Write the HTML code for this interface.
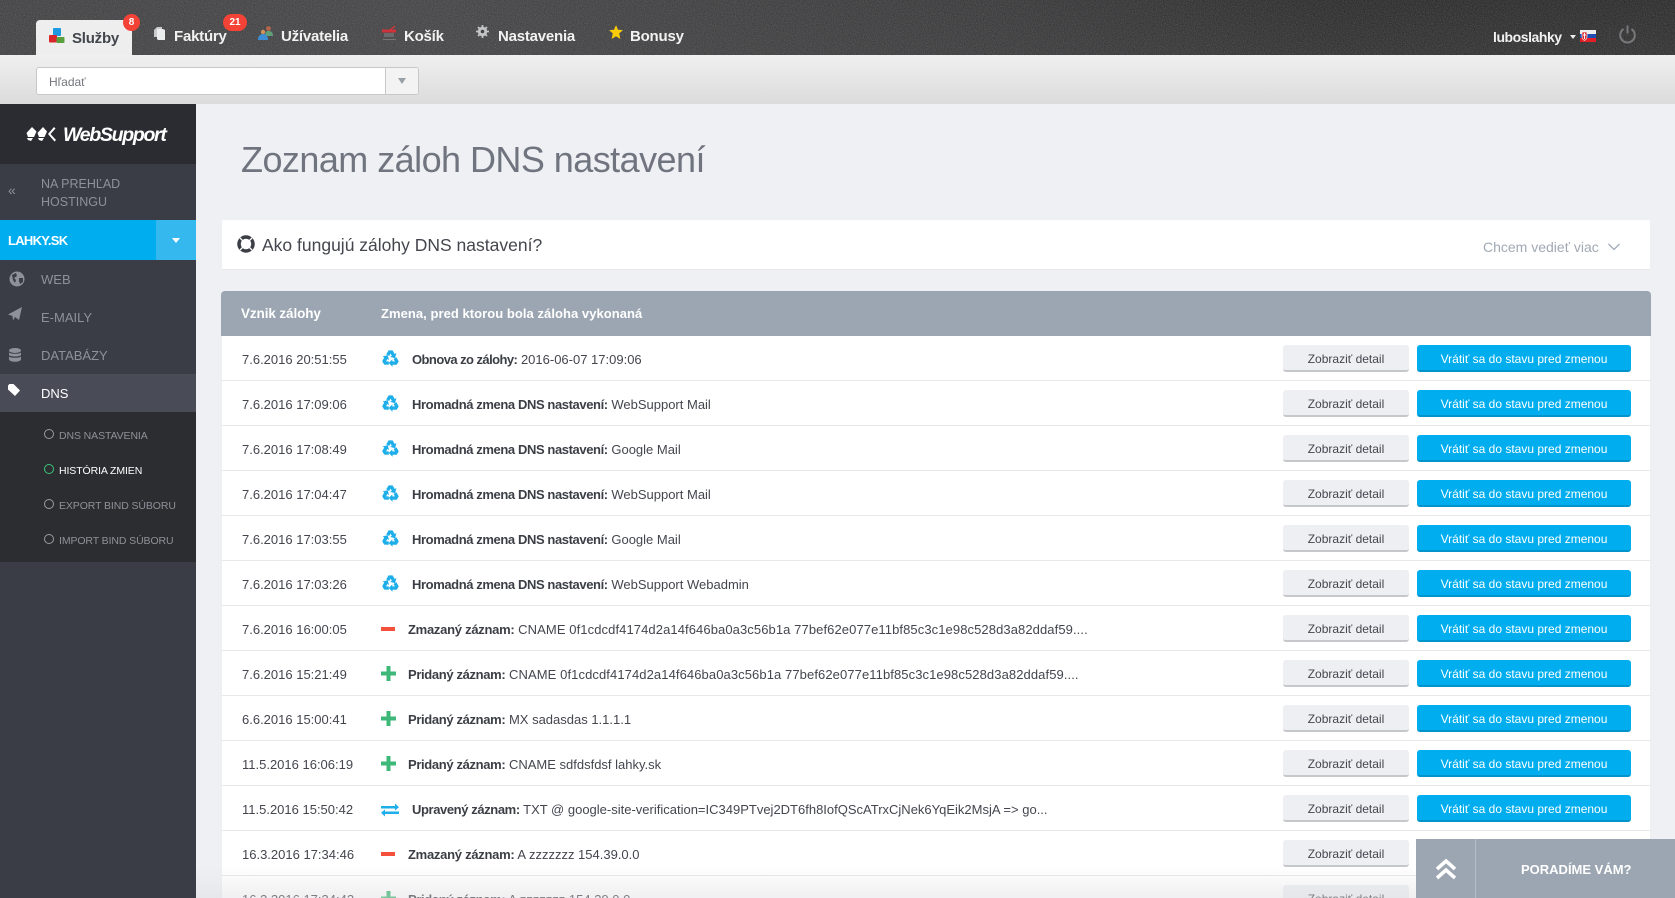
<!DOCTYPE html>
<html lang="sk"><head><meta charset="utf-8"><title>Zoznam záloh DNS nastavení</title>
<style>
*{box-sizing:border-box}
html,body{margin:0;padding:0;width:1675px;height:898px;overflow:hidden;background:#eef0f4;font-family:"Liberation Sans",sans-serif;color:#44464e}
#w{position:absolute;left:0;top:0;width:1675px;height:898px;overflow:hidden}
.a{position:absolute;white-space:nowrap}
#top{left:0;top:0;width:1675px;height:55px;background:linear-gradient(90deg,rgba(70,70,72,.85) 0,rgba(72,72,74,.9) 25%,rgba(70,70,72,.5) 60%,rgba(60,60,60,0) 80%),linear-gradient(#2c2c2d,#333334)}
.nav{font-size:15px;font-weight:bold;color:#f2f2f2;top:28px;line-height:18px;letter-spacing:-.22px}
.bdg{background:#f44336;color:#fff;font-size:10px;font-weight:bold;text-align:center;line-height:17px;height:17px;border-radius:9px;top:14px}
#srch{left:0;top:55px;width:1675px;height:49px;background:linear-gradient(#f0f0f0,#dcdbdb)}
#side{left:0;top:104px;width:196px;height:794px;background:#3a3d46}
.s{font-size:13px;color:#8e9199;left:41px;line-height:18px}
.ss{font-size:10.5px;color:#8e9199;left:59px;line-height:14px;letter-spacing:-.1px}
.c{left:44px;width:10px;height:10px;border:1.5px solid #9a9ca2;border-radius:50%}
.r{left:222px;width:1428px;height:45px;background:#fff;border-bottom:1px solid #e8e8ea}
.r .d{position:absolute;left:20px;top:16px;font-size:13px;line-height:16px;color:#44464e}
.r .t{position:absolute;top:16px;font-size:13px;line-height:16px;color:#44464e;white-space:nowrap}
.r b{color:#3c3e46}
.r svg{position:absolute}
.b1{position:absolute;left:1061px;top:9px;width:126px;height:27px;background:#eeeff3;border-bottom:2px solid #c6c7cb;border-radius:3px;font-size:12px;text-align:center;line-height:29px;color:#44464e}
.b2{position:absolute;left:1195px;top:9px;width:214px;height:27px;background:#00aeef;border-bottom:2px solid #0094cc;border-radius:3px;font-size:12px;text-align:center;line-height:29px;color:#fff}
.ho{letter-spacing:-.4px}.zm{letter-spacing:-.27px}.pr{letter-spacing:-.35px}.up{letter-spacing:-.4px}.ob{letter-spacing:-.56px}
.hx{letter-spacing:.09px}
</style></head><body><div id="w">
<svg width="0" height="0" style="position:absolute"><defs>
<path id="rp" d="M5.500 6.200L8 2H12.200L14.400 5.800 16.200 4.800 14.800 10.200 9.600 8.800 11.400 7.800 10 5.400 8.600 7.900z"/>
<g id="rec" fill="#1eaeea">
<use href="#rp"/><use href="#rp" transform="rotate(120 10 10.800)"/><use href="#rp" transform="rotate(240 10 10.800)"/>
</g>
<g id="plus" fill="#3db878"><path d="M5.500 0h4v5.500H15v4H9.500v5.500h-4V9.500H0v-4h5.500z"/></g>
<g id="ud" fill="#1eaeea"><rect x="0" y="3" width="14" height="2.500"/><rect x="4" y="8.500" width="14" height="2.500"/><path d="M4 6.500v7L0 9.800zM14 0.500l4 3.700-4 3.300z"/></g>
<filter id="nz" x="0" y="0" width="100%" height="100%"><feTurbulence type="fractalNoise" baseFrequency="1.100" numOctaves="1" seed="4"/><feColorMatrix type="matrix" values="0 0 0 0 .5  0 0 0 0 .5  0 0 0 0 .5  1.400 0 0 0 -.45"/></filter>
</defs></svg>

<div class="a" id="top"></div>
<svg class="a" style="left:0;top:0;opacity:.35" width="1675" height="55"><rect width="1675" height="55" filter="url(#nz)"/></svg>
<div class="a" style="left:36px;top:20px;width:96px;height:35px;background:#eeeeee;border-radius:4px 4px 0 0"></div>
<svg class="a" style="left:48px;top:27px" width="17" height="17" viewBox="0 0 17 17"><rect x="5" y="1" width="8" height="8" rx="1" fill="#1e9be0"/><rect x="1" y="8" width="8" height="7.500" rx="1" fill="#d9252c"/><rect x="8.500" y="10" width="8" height="6" rx="1" fill="#5b9e3c"/></svg>
<div class="a nav" style="left:72px;top:30px;color:#44464e;font-weight:bold;font-size:15px">Služby</div>
<div class="a bdg" style="left:123px;width:17px">8</div>
<svg class="a" style="left:153px;top:26px" width="13" height="15" viewBox="0 0 13 15"><path d="M1 4l3-3h5v10H1z" fill="#c9cbce"/><path d="M4 3h6l2 1v10H5L4 13z" fill="#eceded"/></svg>
<div class="a nav" style="left:174px">Faktúry</div>
<div class="a bdg" style="left:223px;width:24px">21</div>
<svg class="a" style="left:258px;top:25px" width="16" height="16" viewBox="0 0 16 16"><circle cx="10.500" cy="3.500" r="2.400" fill="#b5654a"/><path d="M7 11c0-4 1-5 3.500-5S15 7 15 11z" fill="#5da07a"/><circle cx="5" cy="7" r="2.200" fill="#d0935a"/><path d="M0 15c0-4 2-6 5-6s5 2 5 6z" fill="#3d8ed6"/></svg>
<div class="a nav" style="left:281px">Užívatelia</div>
<svg class="a" style="left:382px;top:25px" width="15" height="16" viewBox="0 0 15 16"><path d="M8 5l5-4" stroke="#d9353a" stroke-width="1.300"/><rect x="0" y="4.500" width="14" height="3" fill="#cf3238"/><rect x="2" y="8" width="10" height="4" fill="#6b6b6d"/><rect x="1" y="14" width="13" height="1" fill="#777"/></svg>
<div class="a nav" style="left:404px">Košík</div>
<svg class="a" style="left:476px;top:25px" width="13" height="13" viewBox="0 0 13 13"><circle cx="6.500" cy="6.500" r="3.500" fill="none" stroke="#c4c5c7" stroke-width="2.400"/><path d="M6.500 0v13M0 6.500h13M2 2l9 9M11 2l-9 9" stroke="#c4c5c7" stroke-width="1.800"/><circle cx="6.500" cy="6.500" r="1.800" fill="#444"/></svg>
<div class="a nav" style="left:498px">Nastavenia</div>
<svg class="a" style="left:609px;top:25px" width="14" height="14" viewBox="0 0 14 14"><path d="M7 0l2 4.700 5 .4-3.800 3.300L11.400 14 7 11.200 2.600 14l1.200-5.600L0 5.100l5-.4z" fill="#f9cc07"/></svg>
<div class="a nav" style="left:630px">Bonusy</div>
<div class="a nav" style="left:1493px;font-size:14px;letter-spacing:-.45px">luboslahky</div>
<div class="a" style="left:1570px;top:35px;border:3.500px solid transparent;border-top:4px solid #eee;border-bottom:0"></div>
<svg class="a" style="left:1580px;top:30px" width="16" height="12" viewBox="0 0 16 12"><rect width="16" height="4" fill="#eee"/><rect y="4" width="16" height="4" fill="#1f4fb5"/><rect y="8" width="16" height="4" fill="#e01f26"/><path d="M2 2h5v5q0 2-2.500 3.500Q2 9 2 7z" fill="#d8262c" stroke="#eee" stroke-width=".7"/><path d="M4.500 3v6M3 5h3" stroke="#fff"/></svg>
<div class="a" style="left:1609px;top:27px;width:1px;height:15px;background:#444"></div>
<svg class="a" style="left:1618px;top:24px" width="19" height="20" viewBox="0 0 19 20"><path d="M5.600 5a7.300 7.300 0 1 0 7.800 0" fill="none" stroke="#77787a" stroke-width="2"/><path d="M9.500 1.500v8" stroke="#77787a" stroke-width="2"/></svg>

<div class="a" id="srch"></div>
<div class="a" style="left:36px;top:67px;width:383px;height:28px;background:#fff;border:1px solid #c8c8c8;border-radius:3px"></div>
<div class="a" style="left:385px;top:68px;width:33px;height:26px;background:#f3f3f3;border-left:1px solid #c8c8c8;border-radius:0 3px 3px 0"></div>
<div class="a" style="left:398px;top:78px;border:4px solid transparent;border-top:6px solid #9aa0a8;border-bottom:0"></div>
<div class="a" style="left:49px;top:75px;font-size:12px;line-height:15px;color:#74767c">Hľadať</div>

<div class="a" id="side"></div>
<div class="a" style="left:0;top:104px;width:196px;height:60px;background:#2b2c31"></div>
<svg class="a" style="left:26px;top:127px" width="32" height="16" viewBox="0 0 32 16"><path d="M6 0l4.500 4.500L8 10H2L.5 6zM1 11h6l-2 3-3-1zM17 0l4 4.500L18.500 10H13l-1.500-4zM12 11h6l-2 3-3-1zM28 0l1.500 1.500-5 5.500 5.500 6-1.500 1.500L22 7z" fill="#fff"/></svg>
<div class="a" style="left:63px;top:123px;font-size:19.500px;line-height:24px;font-style:italic;font-weight:bold;color:#fff;letter-spacing:-1.300px">WebSupport</div>
<div class="a" style="left:8px;top:181px;font-size:14px;line-height:18px;color:#8e9199">«</div>
<div class="a s" style="top:175px;line-height:18px;font-size:12.500px">NA PREHĽAD<br>HOSTINGU</div>
<div class="a" style="left:0;top:220px;width:156px;height:40px;background:#00aeef"></div>
<div class="a" style="left:156px;top:220px;width:40px;height:40px;background:#35b8ee"></div>
<div class="a" style="left:172px;top:238px;border:4px solid transparent;border-top:5px solid #fff;border-bottom:0"></div>
<div class="a" style="left:8px;top:232px;font-size:13px;font-weight:bold;line-height:18px;color:#fff;letter-spacing:-.7px">LAHKY.SK</div>

<svg class="a" style="left:9px;top:271px" width="16" height="16" viewBox="0 0 16 16"><circle cx="8" cy="8" r="7.500" fill="#8e9199"/><path d="M3 4l4-2 1 3-3 2 2 2-1 3-2-3zM10 7l4 0 0 4-3 2-1-3z" fill="#3a3d46"/></svg>
<div class="a s" style="top:271px">WEB</div>
<svg class="a" style="left:8px;top:307px" width="14" height="14" viewBox="0 0 14 14"><path d="M14 0L11 13 7 10l-2 3.500L4.500 9 0 7.500z" fill="#8e9199"/></svg>
<div class="a s" style="top:309px">E-MAILY</div>
<svg class="a" style="left:9px;top:348px" width="12" height="14" viewBox="0 0 12 14"><ellipse cx="6" cy="2.500" rx="6" ry="2.500" fill="#8e9199"/><path d="M0 4.500c1 1.700 11 1.700 12 0v2.500c-1 2-11 2-12 0zM0 8.500c1 1.700 11 1.700 12 0V11.500c-1 3-11 3-12 0z" fill="#8e9199"/></svg>
<div class="a s" style="top:347px">DATABÁZY</div>
<div class="a" style="left:0;top:374px;width:196px;height:38px;background:#494c57"></div>
<svg class="a" style="left:8px;top:384px" width="12" height="12" viewBox="0 0 12 12"><path d="M0 1.500L1.500 0h4L12 6.500 7 12 0 5.500z" fill="#fff"/></svg>
<div class="a s" style="top:385px;color:#fff">DNS</div>
<div class="a" style="left:0;top:412px;width:196px;height:150px;background:#2c2d30"></div>
<div class="a c" style="top:429px"></div><div class="a ss" style="top:429px">DNS NASTAVENIA</div>
<div class="a c" style="top:464px;border-color:#3dc47e"></div><div class="a ss" style="top:464px;color:#fff">HISTÓRIA ZMIEN</div>
<div class="a c" style="top:499px"></div><div class="a ss" style="top:499px">EXPORT BIND SÚBORU</div>
<div class="a c" style="top:534px"></div><div class="a ss" style="top:534px">IMPORT BIND SÚBORU</div>

<div class="a" style="left:241px;top:136px;font-size:36px;line-height:48px;color:#70747e;letter-spacing:-.55px">Zoznam záloh DNS nastavení</div>

<div class="a" style="left:222px;top:220px;width:1428px;height:50px;background:#fff;border-bottom:1px solid #e8e8ea;border-radius:2px"></div>
<svg class="a" style="left:237px;top:235px" width="18" height="18" viewBox="0 0 18 18"><circle cx="9" cy="9" r="7" fill="none" stroke="#3c3e46" stroke-width="3.500"/><path d="M3 3l3.500 3.500M15 3l-3.500 3.500M3 15l3.500-3.500M15 15l-3.500-3.500" stroke="#fff" stroke-width="1.300"/></svg>
<div class="a" style="left:262px;top:235px;font-size:17.500px;line-height:21px;color:#44464e">Ako fungujú zálohy DNS nastavení?</div>
<div class="a" style="left:1483px;top:238px;font-size:14px;line-height:18px;color:#a1a9b4">Chcem vedieť viac</div>
<svg class="a" style="left:1608px;top:243px" width="12" height="8" viewBox="0 0 12 8"><path d="M.5 1l5.500 5.500L11.500 1" fill="none" stroke="#a1a9b4" stroke-width="1.300"/></svg>

<div class="a" style="left:221px;top:291px;width:1430px;height:45px;background:#9ba6b2;border-radius:4px 4px 0 0"></div>
<div class="a" style="left:241px;top:305px;font-size:13.500px;font-weight:bold;line-height:17px;color:#fff;letter-spacing:-.1px">Vznik zálohy</div>
<div class="a" style="left:381px;top:305px;font-size:13px;font-weight:bold;line-height:17px;color:#fff;letter-spacing:.05px">Zmena, pred ktorou bola záloha vykonaná</div>

<div class="a r" style="top:336px"><span class="d">7.6.2016 20:51:55</span><svg style="left:158px;top:12px" width="21" height="21" viewBox="-1 -.5 22 22"><use href="#rec"/></svg><span class="t" style="left:190px"><b class="ob">Obnova zo zálohy:</b> 2016-06-07 17:09:06</span><span class="b1">Zobraziť detail</span><span class="b2">Vrátiť sa do stavu pred zmenou</span></div>
<div class="a r" style="top:381px"><span class="d">7.6.2016 17:09:06</span><svg style="left:158px;top:12px" width="21" height="21" viewBox="-1 -.5 22 22"><use href="#rec"/></svg><span class="t" style="left:190px"><b class="ho">Hromadná zmena DNS nastavení:</b> WebSupport Mail</span><span class="b1">Zobraziť detail</span><span class="b2">Vrátiť sa do stavu pred zmenou</span></div>
<div class="a r" style="top:426px"><span class="d">7.6.2016 17:08:49</span><svg style="left:158px;top:12px" width="21" height="21" viewBox="-1 -.5 22 22"><use href="#rec"/></svg><span class="t" style="left:190px"><b class="ho">Hromadná zmena DNS nastavení:</b> Google Mail</span><span class="b1">Zobraziť detail</span><span class="b2">Vrátiť sa do stavu pred zmenou</span></div>
<div class="a r" style="top:471px"><span class="d">7.6.2016 17:04:47</span><svg style="left:158px;top:12px" width="21" height="21" viewBox="-1 -.5 22 22"><use href="#rec"/></svg><span class="t" style="left:190px"><b class="ho">Hromadná zmena DNS nastavení:</b> WebSupport Mail</span><span class="b1">Zobraziť detail</span><span class="b2">Vrátiť sa do stavu pred zmenou</span></div>
<div class="a r" style="top:516px"><span class="d">7.6.2016 17:03:55</span><svg style="left:158px;top:12px" width="21" height="21" viewBox="-1 -.5 22 22"><use href="#rec"/></svg><span class="t" style="left:190px"><b class="ho">Hromadná zmena DNS nastavení:</b> Google Mail</span><span class="b1">Zobraziť detail</span><span class="b2">Vrátiť sa do stavu pred zmenou</span></div>
<div class="a r" style="top:561px"><span class="d">7.6.2016 17:03:26</span><svg style="left:158px;top:12px" width="21" height="21" viewBox="-1 -.5 22 22"><use href="#rec"/></svg><span class="t" style="left:190px"><b class="ho">Hromadná zmena DNS nastavení:</b> WebSupport Webadmin</span><span class="b1">Zobraziť detail</span><span class="b2">Vrátiť sa do stavu pred zmenou</span></div>
<div class="a r" style="top:606px"><span class="d">7.6.2016 16:00:05</span><svg style="left:159px;top:21px" width="14" height="4"><rect width="14" height="4" fill="#f4503c"/></svg><span class="t hx" style="left:186px"><b class="zm">Zmazaný záznam:</b> CNAME 0f1cdcdf4174d2a14f646ba0a3c56b1a 77bef62e077e11bf85c3c1e98c528d3a82ddaf59....</span><span class="b1">Zobraziť detail</span><span class="b2">Vrátiť sa do stavu pred zmenou</span></div>
<div class="a r" style="top:651px"><span class="d">7.6.2016 15:21:49</span><svg style="left:159px;top:15px" width="15" height="15" viewBox="0 0 15 15"><use href="#plus"/></svg><span class="t hx" style="left:186px"><b class="pr">Pridaný záznam:</b> CNAME 0f1cdcdf4174d2a14f646ba0a3c56b1a 77bef62e077e11bf85c3c1e98c528d3a82ddaf59....</span><span class="b1">Zobraziť detail</span><span class="b2">Vrátiť sa do stavu pred zmenou</span></div>
<div class="a r" style="top:696px"><span class="d">6.6.2016 15:00:41</span><svg style="left:159px;top:15px" width="15" height="15" viewBox="0 0 15 15"><use href="#plus"/></svg><span class="t" style="left:186px"><b class="pr">Pridaný záznam:</b> MX sadasdas 1.1.1.1</span><span class="b1">Zobraziť detail</span><span class="b2">Vrátiť sa do stavu pred zmenou</span></div>
<div class="a r" style="top:741px"><span class="d">11.5.2016 16:06:19</span><svg style="left:159px;top:15px" width="15" height="15" viewBox="0 0 15 15"><use href="#plus"/></svg><span class="t" style="left:186px"><b class="pr">Pridaný záznam:</b> CNAME sdfdsfdsf lahky.sk</span><span class="b1">Zobraziť detail</span><span class="b2">Vrátiť sa do stavu pred zmenou</span></div>
<div class="a r" style="top:786px"><span class="d">11.5.2016 15:50:42</span><svg style="left:159px;top:17px" width="18" height="14" viewBox="0 0 18 14"><use href="#ud"/></svg><span class="t" style="left:190px"><b class="up">Upravený záznam:</b> TXT @ google-site-verification=IC349PTvej2DT6fh8IofQScATrxCjNek6YqEik2MsjA =&gt; go...</span><span class="b1">Zobraziť detail</span><span class="b2">Vrátiť sa do stavu pred zmenou</span></div>
<div class="a r" style="top:831px"><span class="d">16.3.2016 17:34:46</span><svg style="left:159px;top:21px" width="14" height="4"><rect width="14" height="4" fill="#f4503c"/></svg><span class="t" style="left:186px"><b class="zm">Zmazaný záznam:</b> A zzzzzzz 154.39.0.0</span><span class="b1">Zobraziť detail</span></div>
<div class="a r" style="top:876px"><span class="d">16.3.2016 17:34:42</span><svg style="left:159px;top:15px" width="15" height="15" viewBox="0 0 15 15"><use href="#plus"/></svg><span class="t" style="left:186px"><b class="pr">Pridaný záznam:</b> A zzzzzzz 154.39.0.0</span><span class="b1">Zobraziť detail</span></div>
<div class="a" style="left:196px;top:866px;width:1479px;height:32px;background:linear-gradient(rgba(225,225,228,0),rgba(218,218,221,.4))"></div>

<div class="a" style="left:1416px;top:839px;width:259px;height:59px;background:#9ba6b2"></div>
<div class="a" style="left:1475px;top:839px;width:1px;height:59px;background:#b4bcc6"></div>
<svg class="a" style="left:1435px;top:858px" width="22" height="22" viewBox="0 0 22 22"><path d="M2 11l9-8 9 8M2 20l9-8 9 8" fill="none" stroke="#fff" stroke-width="3.600"/></svg>
<div class="a" style="left:1521px;top:861px;font-size:13px;font-weight:bold;line-height:17px;color:#fff">PORADÍME VÁM?</div>
</div></body></html>
